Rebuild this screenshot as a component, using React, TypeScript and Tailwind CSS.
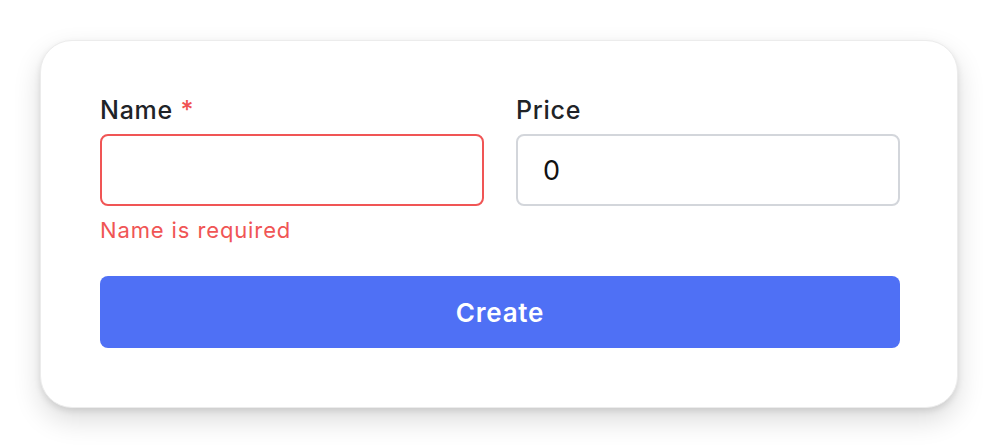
export default function App() {
  return (
    <div className="min-h-screen bg-white p-10 font-['Inter','Noto_Sans',sans-serif]">
      <form
        onSubmit={(e) => e.preventDefault()}
        className="flex h-[368px] flex-col rounded-[32px] border border-[#ececec] bg-white pl-[59px] pr-[57px] pt-[53px] shadow-[0_12px_28px_rgba(0,0,0,0.14),0_3px_6px_rgba(0,0,0,0.1)]"
      >
        <div className="grid grid-cols-2 gap-8">
          <div className="flex flex-col">
            <label className="mb-2 text-[25px] font-medium leading-8 tracking-[0.03em] text-[#202327]">
              Name <span className="text-[#f05252]">*</span>
            </label>
            <input
              type="text"
              className="h-[72px] rounded-lg border-2 border-[#f05555] bg-white px-[25px] text-[27px] text-[#111] outline-none"
            />
            <p className="mt-[10px] text-[22px] leading-7 tracking-[0.04em] text-[#f05555]">Name is required</p>
          </div>
          <div className="flex flex-col">
            <label className="mb-2 text-[25px] font-medium leading-8 tracking-[0.03em] text-[#202327]">Price</label>
            <input
              type="text"
              defaultValue="0"
              className="h-[72px] rounded-lg border-2 border-[#d3d6db] bg-white px-[25px] text-[27px] text-[#111] outline-none"
            />
          </div>
        </div>
        <button
          type="submit"
          className="mt-8 h-[72px] rounded-lg bg-[#4f70f5] text-[26px] font-semibold tracking-[0.03em] text-white"
        >
          Create
        </button>
      </form>
    </div>
  );
}
